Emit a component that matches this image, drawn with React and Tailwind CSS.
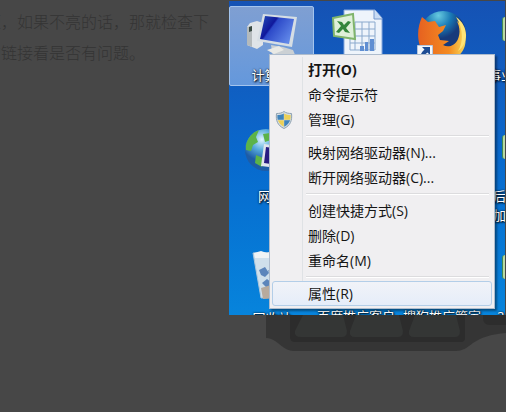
import React from "react";

const groups = [
  [
    { label: "打开(O)", bold: true },
    { label: "命令提示符" },
    { label: "管理(G)", shield: true },
  ],
  [{ label: "映射网络驱动器(N)..." }, { label: "断开网络驱动器(C)..." }],
  [{ label: "创建快捷方式(S)" }, { label: "删除(D)" }, { label: "重命名(M)" }],
  [{ label: "属性(R)", active: true }],
];

function Shield() {
  return (
    <svg viewBox="0 0 18 18" className="h-[18px] w-[18px]" aria-hidden="true">
      <path d="M9 .5c2 1.5 4.500 2 7.500 2 .8 7-1 12-7.500 15C2.500 14.500.7 9.500 1.500 2.500 4.500 2.500 7 2 9 .5z" fill="#d5dde3" stroke="#8fa2b1" />
      <path d="M8.800 2.500v6.300H2.700c-.3-1.500-.4-3-.3-4.800 2.500 0 4.500-.5 6.400-1.500zM9.200 9.200h5.900c-1 3-3 5-5.900 6.600z" fill="#3f83bb" />
      <path d="M9.200 2.500v6.300h6.100c.3-1.500.4-3 .3-4.800-2.500 0-4.500-.5-6.400-1.500zM8.800 9.200H2.900c1 3 3 5 5.900 6.600z" fill="#ecd057" />
    </svg>
  );
}

function Computer() {
  return (
    <svg viewBox="0 0 60 50" className="h-[50px] w-[60px]" aria-hidden="true">
      <defs>
        <linearGradient id="screen" x1="0" y1="0" x2="1" y2="0.600">
          <stop offset="0" stopColor="#2450b8" />
          <stop offset=".4" stopColor="#10189c" />
          <stop offset=".45" stopColor="#2c49c8" />
          <stop offset="1" stopColor="#5f86e8" />
        </linearGradient>
      </defs>
      <path d="M6 20l3-4 7-2 6 2v22l-6 4-10-4z" fill="#dfe4e8" />
      <path d="M6 20l5-1v21l-5-2z" fill="#b4babc" />
      <path d="M8 20l3-1v5l-3 1z" fill="#394a43" />
      <path d="M30 38l12 2 10 3 3 7H32z" fill="#cbd0d4" />
      <path d="M26 43l12-4 5 4-10 4z" fill="#e9e9e5" />
      <path d="M22 7l34 3-5 30-35-6z" fill="#d6dee4" />
      <path d="M24 9l29 3-5 25-29-5z" fill="url(#screen)" />
    </svg>
  );
}

function Sheet() {
  return (
    <svg viewBox="0 0 54 52" className="h-[52px] w-[54px]" aria-hidden="true">
      <path d="M14 2h31l7 8v42H14z" fill="#eef4fb" stroke="#88a9dc" />
      <path d="M44 2v9h8" fill="#c9dcf4" stroke="#7698cc" />
      <path d="M25 14h20M20 21h25M20 28h25M20 35h25M20 42h25M20 21v21M25 14v28M32 14v28M39 14v28M45 14v28" stroke="#8aa9cd" fill="none" />
      <path d="M30 43v-5h4v5zM35 43v-9h3v9zM40 43V31h4v12z" fill="#5f8ed2" />
      <path d="M3 10l20-4 2 25-21-3z" fill="#dff0d9" stroke="#80b46b" strokeWidth="2" />
      <path d="M7 13l5 1 2 3 4-4 3 1-5 6 4 5-5-1-2-3-4 4-3-1 5-6z" fill="#34863b" />
    </svg>
  );
}

function Fox() {
  return (
    <svg viewBox="0 0 50 50" className="h-[50px] w-[50px]" aria-hidden="true">
      <defs>
        <radialGradient id="globe" cx=".4" cy=".1">
          <stop offset="0" stopColor="#67cae0" />
          <stop offset=".55" stopColor="#1979b5" />
          <stop offset="1" stopColor="#173a7b" />
        </radialGradient>
        <linearGradient id="tail" x1="0" y1="0" x2="1" y2="0">
          <stop offset="0" stopColor="#e66120" />
          <stop offset=".65" stopColor="#f48b21" />
          <stop offset="1" stopColor="#f7d95a" />
        </linearGradient>
      </defs>
      <circle cx="26" cy="25" r="23" fill="url(#globe)" />
      <path d="M5 8l6 5 7-1 4 6 7-2-3 6-5 4 2 5 9 1-6 4c5 3 12 1 15-6 3-8 1-13-1-18 10 8 12 26 2 34-9 8-27 8-35-2C-1 35 0 18 5 8z" fill="url(#tail)" />
      <path d="M39 8c12 8 14 25 2 34 6-10 5-23-2-34z" fill="#ffe477" />
    </svg>
  );
}

function ShortcutArrow() {
  return (
    <svg viewBox="0 0 16 16" className="absolute left-[17px] top-[36px] h-4 w-4" aria-hidden="true">
      <path d="M.5.5h15v15H.5z" fill="#f3f6fa" stroke="#b6c6dc" />
      <path d="M5 2h8v8l-2.500-2.500C8 9 7 11 7 15H3c0-5 1.500-8 4.500-10.500z" fill="#1d4c94" />
    </svg>
  );
}

function Network() {
  return (
    <svg viewBox="0 0 54 46" className="h-[46px] w-[54px]" aria-hidden="true">
      <defs>
        <radialGradient id="earth" cx=".4" cy=".25">
          <stop offset="0" stopColor="#e2f6ff" />
          <stop offset=".5" stopColor="#58abdc" />
          <stop offset="1" stopColor="#1d5ca6" />
        </radialGradient>
      </defs>
      <circle cx="22" cy="22" r="21" fill="url(#earth)" />
      <path d="M2 17C4 9 9 4 15 2l-3 7 2 5-5 3-2 6-5-1zM12 27l7 3-1 9-7-4zM19 6l7-1 1 7-6 2z" fill="#5cb348" />
      <path d="M20 16l30 4v22l-33-4z" fill="#e0e5ed" />
      <path d="M22 19l26 4v16l-28-4z" fill="#281c82" />
    </svg>
  );
}

function Bin() {
  return (
    <svg viewBox="0 0 40 50" className="h-[50px] w-[40px]" aria-hidden="true">
      <path d="M1 3l37-1-6 45-23 1z" fill="#cfdfeb" stroke="#acc6da" />
      <path d="M2 3l7-2 6 2 6-2 16 1-1 6H3z" fill="#eff3f5" />
      <path d="M7 20l6-3 4 6-4 4-4-2zM10 33l5-4 5 4-5 5zM16 20l6 3-3 5z" fill="#5c85bb" />
      <path d="M9 38l10-3 9 5-3 8-14 1z" fill="#b7aa9d" />
    </svg>
  );
}

const caption =
  "whitespace-nowrap text-[13px] leading-5 text-white [text-shadow:1px_1px_2px_#000,0_0_2px_#000]";

function DesktopIcon({ place, label, children }) {
  return (
    <div className={"absolute flex w-[84px] flex-col items-center " + place}>
      {children}
      {label && <span className={"absolute top-[58px] " + caption}>{label}</span>}
    </div>
  );
}

function EdgeIcon({ place }) {
  return <div className={"absolute right-0 h-6 w-[3px] rounded-l border-l border-[#3f8a52] bg-[#b9d9a5] " + place} />;
}

function ContextMenu() {
  return (
    <div role="menu" className="absolute left-[40px] top-[53px] w-[226px] border border-[#aebccd] bg-[#f0eff1] p-[2px] shadow-[2px_2px_2px_#0006]">
      <div className="absolute inset-y-[2px] left-[32px] w-px bg-[#dfe2e5]" />
      {groups.map((group, g) => (
        <div key={g} role="group">
          {g > 0 && <div className="my-[3px] ml-[34px] mr-[3px] h-[2px] border-t border-[#dcdcde] bg-white" />}
          {group.map((item) => (
            <button
              key={item.label}
              role="menuitem"
              className={
                "relative flex h-[25px] w-full items-center rounded-[3px] border text-left text-sm text-[#151515] " +
                (item.active ? "border-[#b3cee8] bg-linear-to-b from-[#f1f3f8] to-[#e5edf9] " : "border-transparent ") +
                (item.bold ? "font-bold" : "")
              }
            >
              <span className="flex w-[35px] pl-[2px]">{item.shield && <Shield />}</span>
              {item.label}
            </button>
          ))}
        </div>
      ))}
    </div>
  );
}

function Keyboard() {
  return (
    <svg viewBox="0 0 240 37" className="ml-auto block h-[37px] w-[240px]" aria-hidden="true">
      <path d="M0 0h240v18c-14 1-24 4-33 10-6 5-11 8-17 8H28c-8 0-13-6-19-10-3-2-6-3-9-3z" fill="#353535" />
      <path d="M24 0h175v23q0 4-4 4H29q-5 0-5-5z" fill="#2c2c2c" />
      <path d="M37 0h40l4 16q0 6-5 6H35q-7 0-6-6zM90 0h43l4 16q0 6-5 6H89q-6 0-5-6zM149 0h41l4 16q0 6-5 6h-41q-6 0-5-6z" fill="#343635" />
      <path d="M217 0h23v10h-16q-7 0-7-7z" fill="#2d2d2d" />
    </svg>
  );
}

export default function App() {
  return (
    <main className="min-h-screen overflow-hidden bg-[#474747] font-['Open_Sans','Noto_Sans_CJK_SC',sans-serif]">
      <div className="flex">
        <div className="min-w-0 flex-1 overflow-hidden pr-5 pt-[7px]">
          <div className="flex flex-col items-end whitespace-nowrap text-base font-light leading-[31px] text-[#343434]">
            <p>短，如果不亮的话，那就检查下</p>
            <p className="pr-16">的链接看是否有问题。</p>
          </div>
        </div>
        <section className="relative mr-px mt-px h-[314px] w-[276px] shrink-0 overflow-hidden bg-linear-to-b from-[#1552b4] via-[#0869cd] to-[#0784dc]">
          <div className="absolute left-0 top-[5px] h-[80px] w-[85px] rounded-[2px] border border-[#a4c4ed] bg-linear-to-b from-[#7f9fd2] to-[#6498dc]" />
          <DesktopIcon place="left-0 top-[6px]" label="计算机"><Computer /></DesktopIcon>
          <DesktopIcon place="left-[86px] top-[7px]"><Sheet /></DesktopIcon>
          <DesktopIcon place="left-[171px] top-[8px]">
            <Fox />
            <ShortcutArrow />
          </DesktopIcon>
          <DesktopIcon place="left-0 top-[127px]" label="网络"><Network /></DesktopIcon>
          <DesktopIcon place="left-[1px] top-[249px]" label="回收站"><Bin /></DesktopIcon>
          <EdgeIcon place="top-4" />
          <EdgeIcon place="top-[134px]" />
          <EdgeIcon place="top-[254px]" />
          <span className={"absolute left-[259px] top-[64px] " + caption}>事业</span>
          <span className={"absolute left-[264px] top-[185px] " + caption}>后</span>
          <span className={"absolute left-[264px] top-[204px] " + caption}>加</span>
          <div className={"absolute left-[88px] top-[305px] flex gap-2 " + caption}>
            <span>百度推广客户</span>
            <span>搜狗推广管家</span>
            <span className="pl-2">2</span>
          </div>
          <ContextMenu />
        </section>
      </div>
      <Keyboard />
    </main>
  );
}
